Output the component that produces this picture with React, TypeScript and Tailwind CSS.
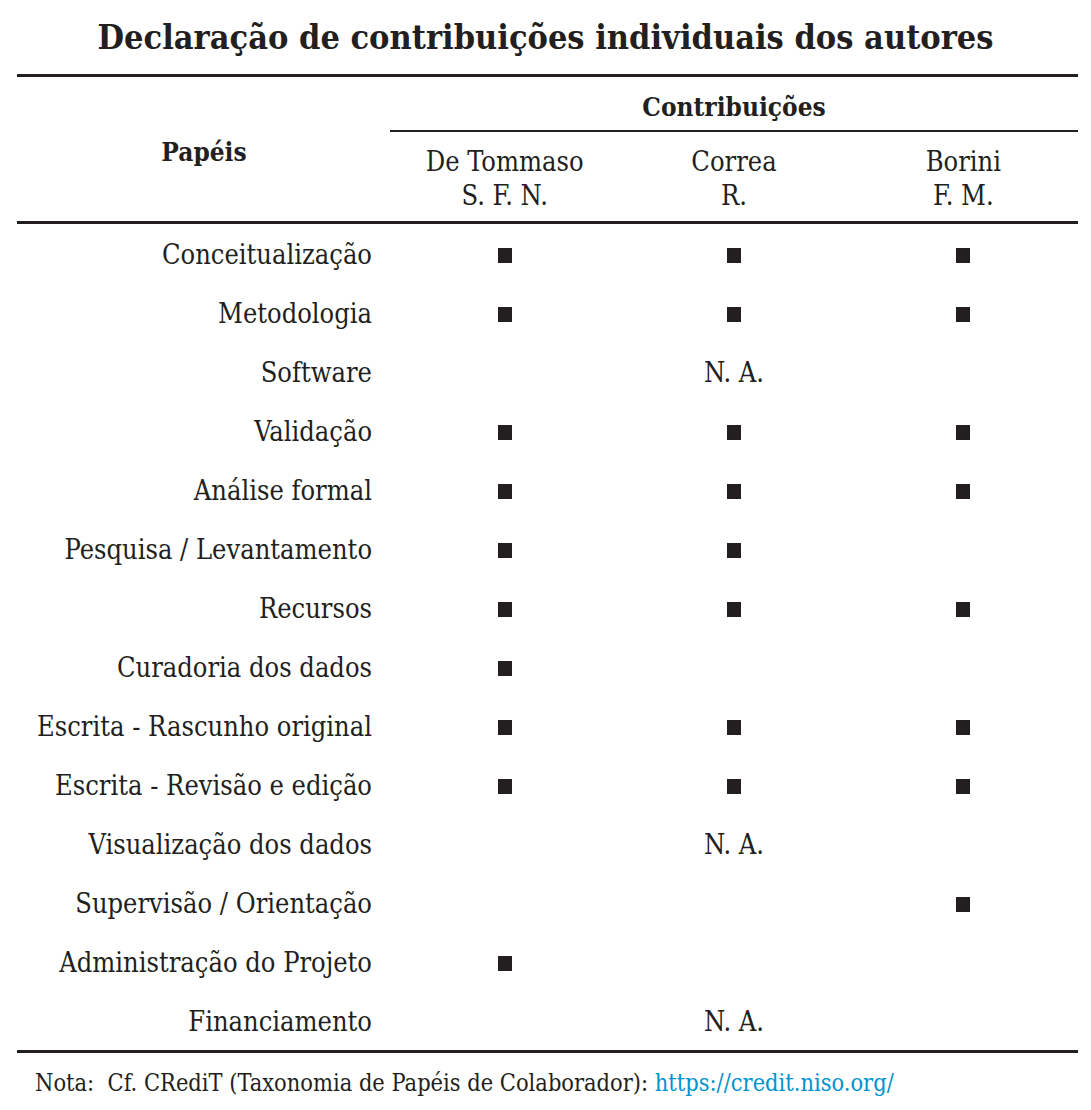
const roles: { label: string; marks: (boolean | 'na')[] }[] = [
  { label: 'Conceitualização', marks: [true, true, true] },
  { label: 'Metodologia', marks: [true, true, true] },
  { label: 'Software', marks: ['na'] },
  { label: 'Validação', marks: [true, true, true] },
  { label: 'Análise formal', marks: [true, true, true] },
  { label: 'Pesquisa / Levantamento', marks: [true, true, false] },
  { label: 'Recursos', marks: [true, true, true] },
  { label: 'Curadoria dos dados', marks: [true, false, false] },
  { label: 'Escrita - Rascunho original', marks: [true, true, true] },
  { label: 'Escrita - Revisão e edição', marks: [true, true, true] },
  { label: 'Visualização dos dados', marks: ['na'] },
  { label: 'Supervisão / Orientação', marks: [false, false, true] },
  { label: 'Administração do Projeto', marks: [true, false, false] },
  { label: 'Financiamento', marks: ['na'] },
]

const authors = [
  ['De Tommaso', 'S. F. N.'],
  ['Correa', 'R.'],
  ['Borini', 'F. M.'],
]

function Mark() {
  return <span className="inline-block w-[14px] h-[15px] bg-[#231f20] mt-[3px]" />
}

export default function App() {
  return (
    <div className="bg-white w-[1091px] h-[1110px] pl-[17px] pr-[13px] text-[#231f20] font-['DejaVu_Serif_Condensed','DejaVu_Serif',serif]">
      {/* Titulo */}
      <h1 className="text-center font-bold text-[34px] leading-[40px] pt-[17px] pb-[17px] pr-[4px]">
        Declaração de contribuições individuais dos autores
      </h1>

      <div className="border-t-[3px] border-[#231f20]" />

      {/* Cabeçalho */}
      <div className="grid grid-cols-[373px_1fr]">
        <div className="flex items-center justify-center font-bold text-[26px] pt-[7px] pl-[1px]">Papéis</div>
        <div>
          <div className="h-[53px] flex items-center justify-center font-bold text-[26px] pt-[7px]">Contribuições</div>
          <div className="border-t-2 border-[#231f20]" />
          <div className="grid grid-cols-3 h-[89px] content-center pt-[5px] text-[27px]">
            {authors.map(([name, initials]) => (
              <div key={name} className="text-center leading-[34px]">
                <div>{name}</div>
                <div>{initials}</div>
              </div>
            ))}
          </div>
        </div>
      </div>

      <div className="border-t-[3px] border-[#231f20]" />

      {/* Linhas */}
      <div className="text-[27px]">
        {roles.map((r) => (
          <div key={r.label} className="grid grid-cols-[373px_1fr_1fr_1fr] h-[59px] items-center">
            <div className="text-right pr-[18px] pt-[3px]">{r.label}</div>
            {r.marks[0] === 'na' ? (
              <div className="col-span-3 text-center pt-[3px]">N. A.</div>
            ) : (
              r.marks.map((m, i) => (
                <div key={i} className="flex justify-center">
                  {m && <Mark />}
                </div>
              ))
            )}
          </div>
        ))}
      </div>

      <div className="border-t-[3px] border-[#231f20]" />

      {/* Nota */}
      <p className="text-[23.4px] pl-[18px] pt-[13px]">
        Nota:&nbsp; Cf. CRediT (Taxonomia de Papéis de Colaborador):{' '}
        <span className="text-[#0093d0]">https://credit.niso.org/</span>
      </p>
    </div>
  )
}
